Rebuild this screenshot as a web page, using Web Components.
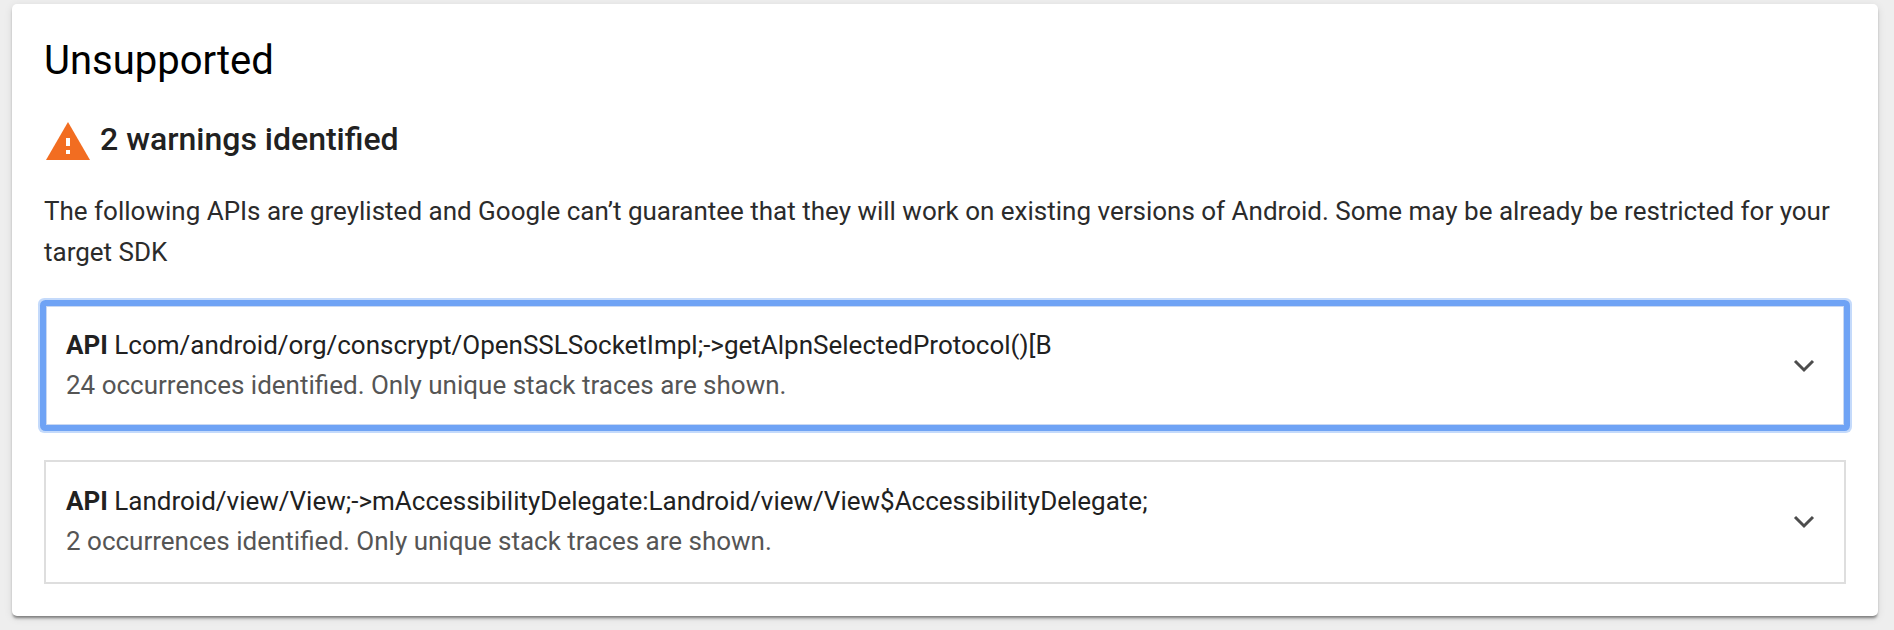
<!DOCTYPE html>
<html>
<head>
<meta charset="utf-8">
<style>
  html, body { margin: 0; height: 630px; overflow: hidden; background: #eeeeee; }
  body { font-family: Roboto, "Liberation Sans", sans-serif; }
</style>
</head>
<body>
<template id="warning-card-tpl">
  <style>
    :host { display: block; margin: 4px 16px 0 12px; height: 612px; box-sizing: border-box;
      padding: 33px 32px 0 32px; background: #fff; border-radius: 5px;
      box-shadow: 0 3px 3px -1px rgba(0,0,0,.45), 0 2px 8px rgba(0,0,0,.1); }
    h2 { margin: 0; font-size: 40px; line-height: 48px; font-weight: 400; color: #000; }
    .count { display: flex; align-items: center; gap: 10px; margin-top: 31px; height: 46px; }
    .count svg { display: block; width: 44px; height: 38px; margin: 4px 0 0 2px; flex: none; }
    h3 { margin: 0; font-size: 32px; line-height: 40px; font-weight: 500; color: #212121; }
    p { margin: 29px 0 0; font-size: 26px; line-height: 41px; color: #2b2b2b; }
    .list { display: flex; flex-direction: column; gap: 33px; margin-top: 31px; }
  </style>
  <h2><slot name="title"></slot></h2>
  <div class="count">
    <svg viewBox="0 0 44 38"><path fill="#f26d21" d="M22 0 44 38H0z"/><path fill="#fff" d="M20 16h4v8h-4zM20 28h4v4h-4z"/></svg>
    <h3><slot name="count"></slot></h3>
  </div>
  <p><slot name="text"></slot></p>
  <div class="list"><slot></slot></div>
</template>

<template id="api-row-tpl">
  <style>
    :host { display: block; height: 124px; box-sizing: border-box; border: 2px solid #dedede; background: #fff; }
    :host([focused]) { height: 123px; border-color: #6fa3f5; border-radius: 2px;
      box-shadow: 0 0 0 4px #6fa3f5, 0 0 0 6px #c4dafb, inset 0 0 0 1px #c9d8f2; }
    .row { display: flex; align-items: center; height: 100%; box-sizing: border-box; padding: 0 20px 0 20px; }
    .text { flex: 1; font-size: 26px; line-height: 40px; color: #212121; padding-bottom: 2px; }
    b { font-weight: 700; }
    .sub { color: #555; }
    svg { display: block; width: 24px; height: 24px; margin-right: 8px; flex: none; }
  </style>
  <div class="row">
    <div class="text">
      <div><b>API</b> <slot name="api"></slot></div>
      <div class="sub"><slot name="sub"></slot></div>
    </div>
    <svg viewBox="0 0 24 24"><path fill="none" stroke="#4d4d4d" stroke-width="3" d="M3 7l9 9 9-9"/></svg>
  </div>
</template>

<warning-card>
  <span slot="title">Unsupported</span>
  <span slot="count">2 warnings identified</span>
  <span slot="text">The following APIs are greylisted and Google can’t guarantee that they will work on existing versions of Android. Some may be already be restricted for your target SDK</span>
  <api-row focused>
    <span slot="api">Lcom/android/org/conscrypt/OpenSSLSocketImpl;-&gt;getAlpnSelectedProtocol()[B</span>
    <span slot="sub">24 occurrences identified. Only unique stack traces are shown.</span>
  </api-row>
  <api-row>
    <span slot="api">Landroid/view/View;-&gt;mAccessibilityDelegate:Landroid/view/View$AccessibilityDelegate;</span>
    <span slot="sub">2 occurrences identified. Only unique stack traces are shown.</span>
  </api-row>
</warning-card>

<script>
// Card with the heading, warning count and the list of rows
class WarningCard extends HTMLElement {
  constructor() {
    super();
    this.attachShadow({ mode: "open" });
    this.shadowRoot.appendChild(document.getElementById("warning-card-tpl").content.cloneNode(true));
  }
}
customElements.define("warning-card", WarningCard);

// One collapsed API row
class ApiRow extends HTMLElement {
  constructor() {
    super();
    this.attachShadow({ mode: "open" });
    this.shadowRoot.appendChild(document.getElementById("api-row-tpl").content.cloneNode(true));
  }
}
customElements.define("api-row", ApiRow);
</script>
</body>
</html>
